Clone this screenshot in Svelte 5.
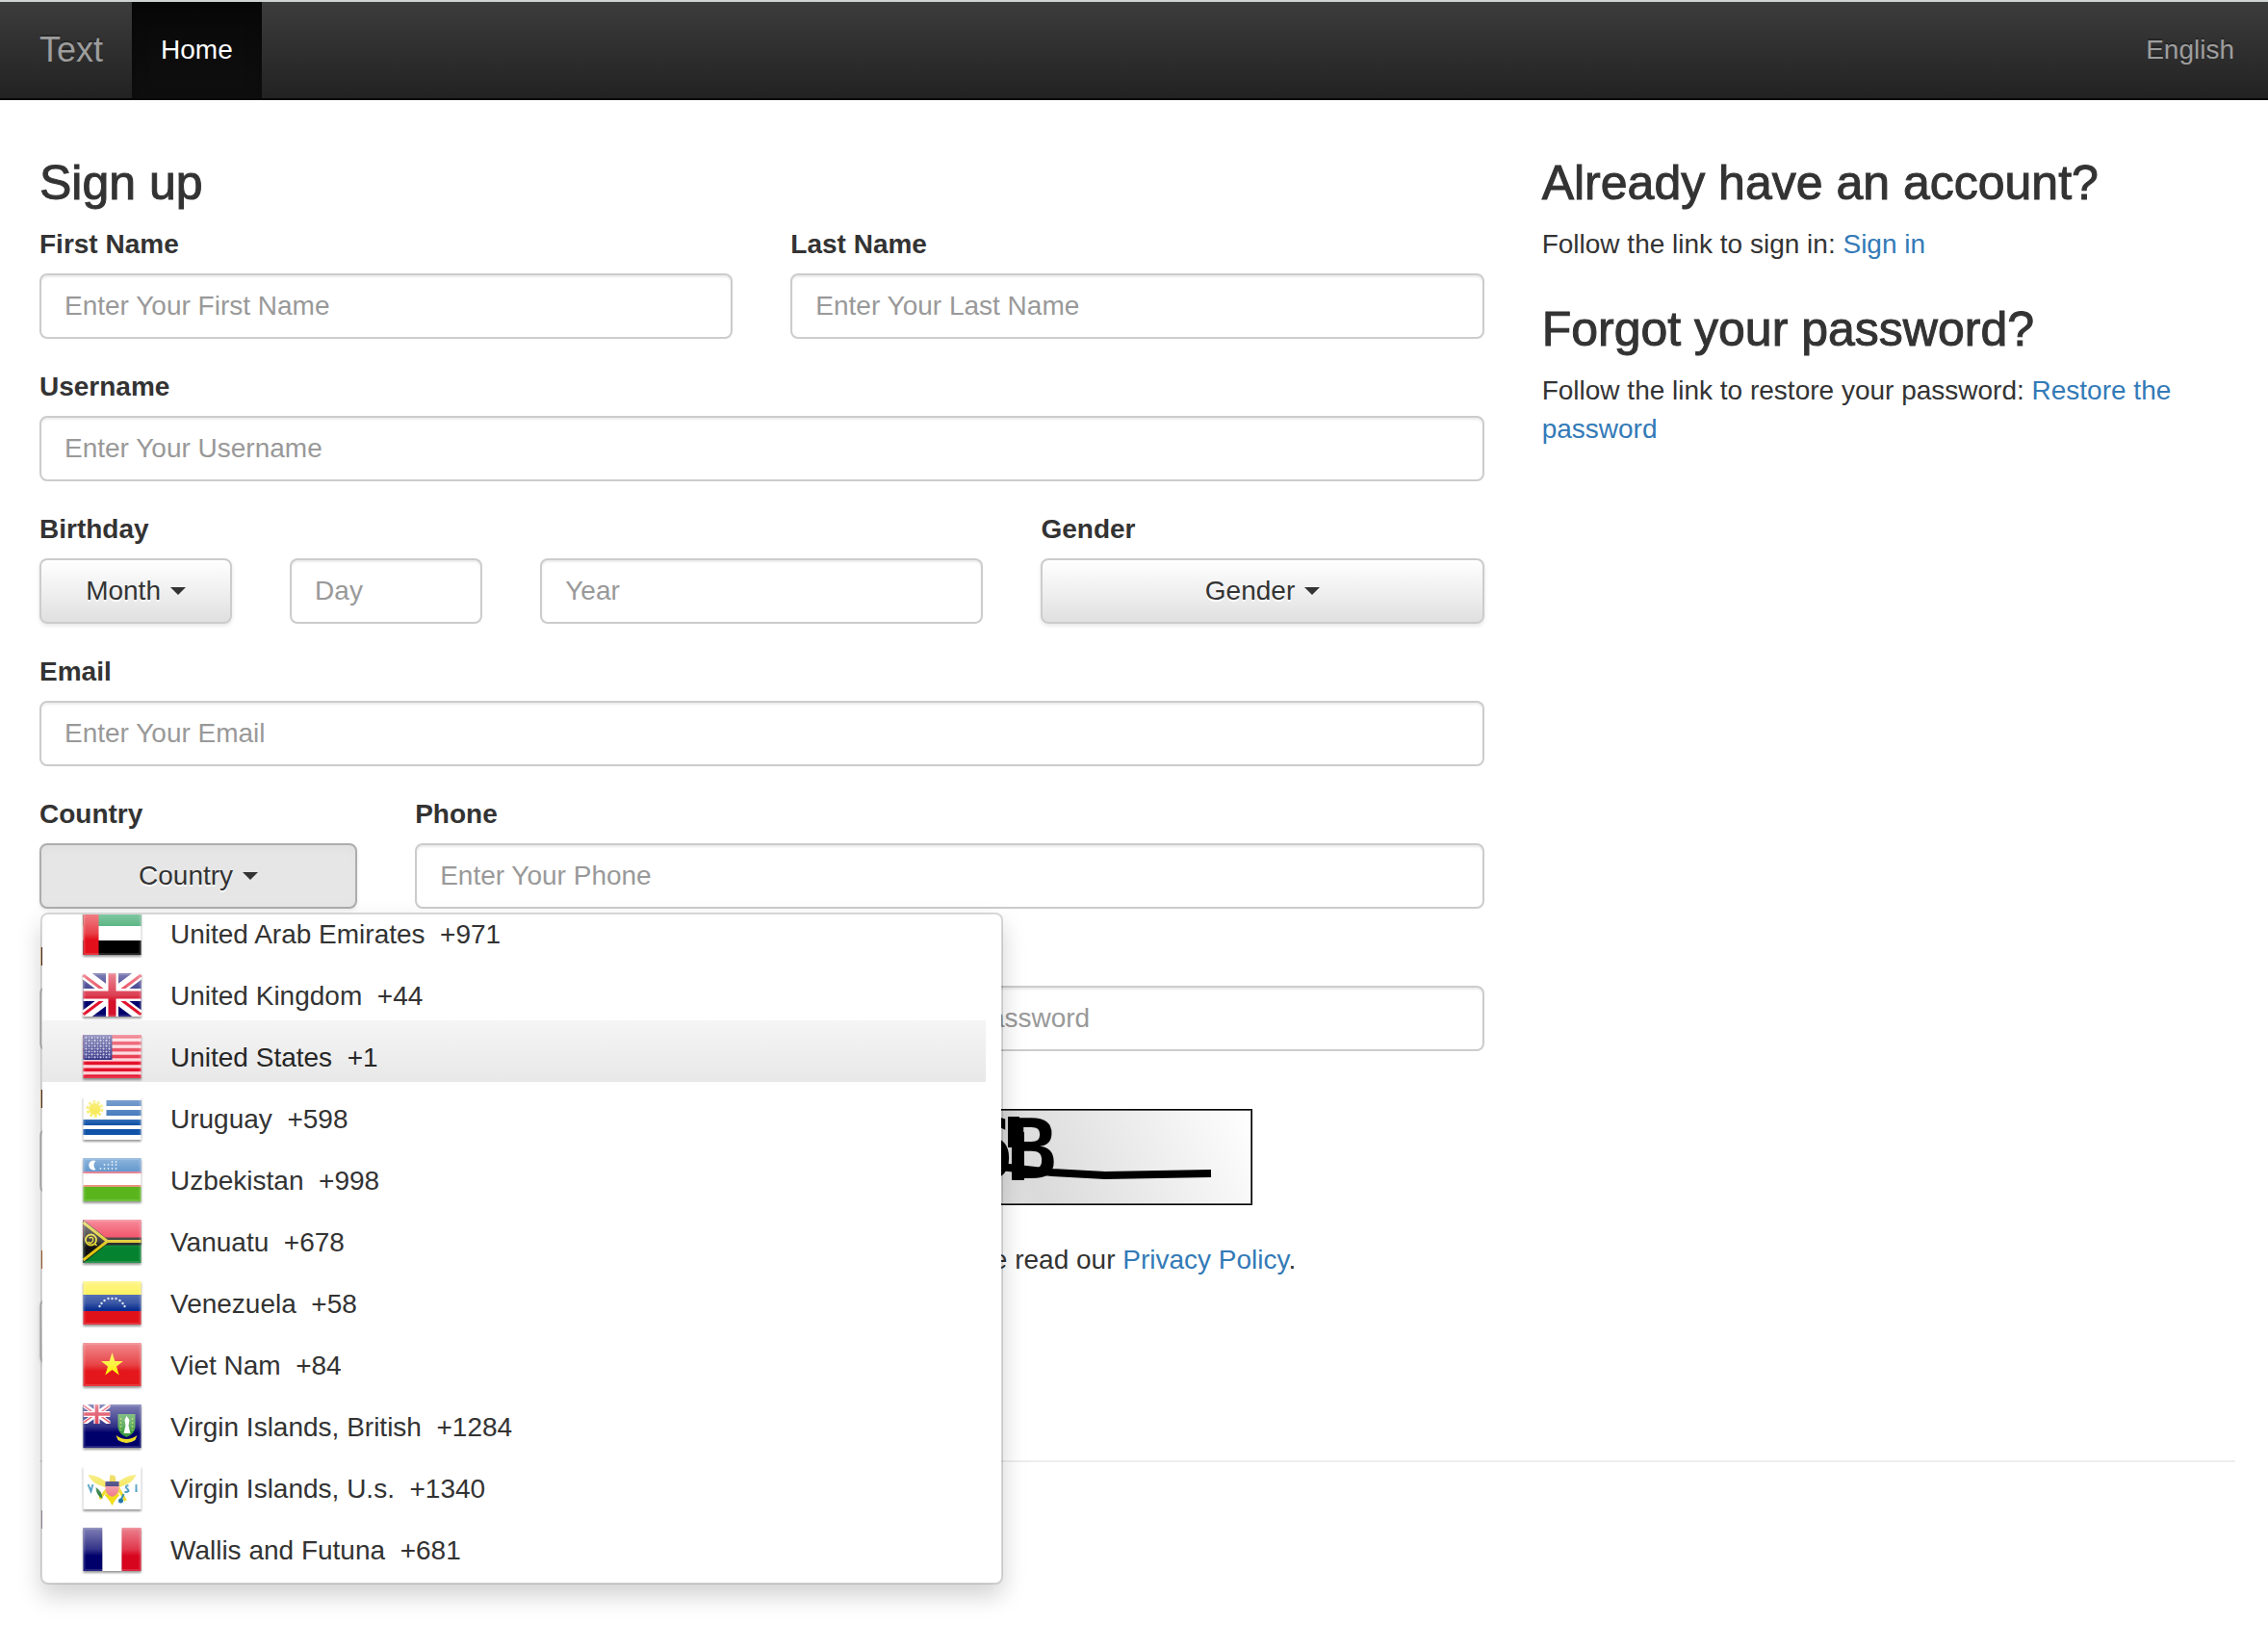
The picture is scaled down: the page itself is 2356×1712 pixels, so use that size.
<script>
  const countries = [
    { code: 'ae', name: 'United Arab Emirates', dial: '+971' },
    { code: 'gb', name: 'United Kingdom', dial: '+44' },
    { code: 'us', name: 'United States', dial: '+1' },
    { code: 'uy', name: 'Uruguay', dial: '+598' },
    { code: 'uz', name: 'Uzbekistan', dial: '+998' },
    { code: 'vu', name: 'Vanuatu', dial: '+678' },
    { code: 've', name: 'Venezuela', dial: '+58' },
    { code: 'vn', name: 'Viet Nam', dial: '+84' },
    { code: 'vg', name: 'Virgin Islands, British', dial: '+1284' },
    { code: 'vi', name: 'Virgin Islands, U.s.', dial: '+1340' },
    { code: 'wf', name: 'Wallis and Futuna', dial: '+681' },
  ];
  let highlighted = $state('us');
  let open = $state(true);

  const stripes = [0, 1, 2, 3, 4, 5, 6];
  const starRows = [0, 1, 2, 3, 4, 5, 6, 7];
  const starCols = [0, 1, 2, 3, 4, 5, 6, 7, 8];
  const arc = [[17, 25], [19, 22], [22, 19], [26, 17], [30, 17], [34, 17], [38, 19], [41, 22], [43, 25]];
  const dots = [[22, 10], [26, 10], [30, 10], [34, 10], [18, 10], [26, 6], [30, 6], [34, 6], [22, 6], [30, 3], [34, 3]];
</script>

{#snippet unionJack()}
  <rect width="60" height="45" fill="#00006b" />
  <path d="M0 0L60 45M60 0L0 45" stroke="#fff" stroke-width="11" />
  <path d="M0 2L28 23M60 2L32 23M0 43L28 22M60 43L32 22" stroke="#e2142d" stroke-width="3" />
  <path d="M30 0V45M0 22.500H60" stroke="#fff" stroke-width="13" />
  <path d="M30 0V45M0 22.500H60" stroke="#d5112b" stroke-width="8" />
{/snippet}

{#snippet flag(code)}
  <svg class="flag" viewBox="0 0 60 45" aria-hidden="true">
    {#if code === 'ae'}
      <rect width="60" height="15" fill="#149650" />
      <rect y="15" width="60" height="15" fill="#fff" />
      <rect y="30" width="60" height="15" fill="#000" />
      <rect width="16" height="45" fill="#e3101b" />
    {:else if code === 'gb'}
      {@render unionJack()}
    {:else if code === 'us'}
      <rect width="60" height="45" fill="#ffd0d6" />
      {#each stripes as i}
        <rect y={i * 7 - i * 0.1} width="60" height="3.600" fill="#e3102b" />
      {/each}
      <rect width="30" height="26" fill="#1a1a78" />
      {#each starRows as r}
        {#each starCols as c}
          <circle cx={3 + c * 3} cy={3 + r * 2.9} r={(r + c) % 2 ? 0.7 : 1.1} fill="#b9b9dc" />
        {/each}
      {/each}
    {:else if code === 'uy'}
      <rect width="60" height="45" fill="#fff" />
      <rect x="24" y="4" width="36" height="6" fill="#0f53a8" />
      <rect x="24" y="14" width="36" height="6" fill="#0f53a8" />
      <rect y="24" width="60" height="6" fill="#0f53a8" />
      <rect y="34" width="60" height="6" fill="#0f53a8" />
      <circle cx="12" cy="13" r="7.500" fill="none" stroke="#f8e84a" stroke-width="3" stroke-dasharray="3 1.700" />
      <circle cx="12" cy="13" r="6" fill="#f6e21c" />
    {:else if code === 'uz'}
      <rect width="60" height="45" fill="#fff" />
      <rect width="60" height="15" fill="#1e6bb8" />
      <rect y="14" width="60" height="2" fill="#d8506a" />
      <rect y="28" width="60" height="2" fill="#e8907c" />
      <rect y="30" width="60" height="15" fill="#5ab51d" />
      <path d="M13 3A5 5 0 1 0 13 12A6 6 0 0 1 13 3Z" fill="#fff" />
      {#each dots as [x, y]}
        <circle cx={x} cy={y + 1} r="0.900" fill="#d5e4f4" />
      {/each}
    {:else if code === 'vu'}
      <rect width="60" height="22" fill="#ee1c3a" />
      <rect y="22" width="60" height="23" fill="#04822f" />
      <path d="M0 22.500H60" stroke="#111" stroke-width="8" />
      <path d="M0 0L28 22.500L0 45Z" fill="#111" />
      <path d="M0 3L25 22.500L0 42M25 22.500H60" fill="none" stroke="#dcc511" stroke-width="3" />
      <circle cx="8" cy="21" r="5.500" fill="none" stroke="#e6d51d" stroke-width="1.800" />
      <path d="M6 19Q11 17 10 22Q8 26 5 23M12 25L14 27" fill="none" stroke="#e6d51d" stroke-width="1.500" />
    {:else if code === 've'}
      <rect width="60" height="14" fill="#fdec16" />
      <rect y="14" width="60" height="17" fill="#0a2f91" />
      <rect y="31" width="60" height="14" fill="#e1111a" />
      {#each arc as [x, y]}
        <circle cx={x} cy={y + 1} r="1.200" fill="#d8deee" />
      {/each}
    {:else if code === 'vn'}
      <rect width="60" height="45" fill="#e3171c" />
      <path d="M30 10L32.800 18.900H41.500L34.500 24.500L37.200 33.500L30 28L22.800 33.500L25.500 24.500L18.500 18.900H27.200Z" fill="#fff013" />
    {:else if code === 'vg'}
      <rect width="60" height="45" fill="#00006b" />
      <svg width="28" height="20" viewBox="0 0 60 45" preserveAspectRatio="none">{@render unionJack()}</svg>
      <path d="M34 32Q45 40 56 32L54 37Q45 43 36 37Z" fill="#eedc25" />
      <path d="M36 10H54V24Q53 31 45 34Q37 31 36 24Z" fill="#3c9b3f" />
      <path d="M45 12L48 16L47 22L49 30H42L44 22L43 16Z" fill="#fff" />
      <path d="M39 14V27M51 14V27" stroke="#a5cb3d" stroke-width="1.500" stroke-dasharray="2 2" />
    {:else if code === 'vi'}
      <rect width="60" height="45" fill="#fff" />
      <path d="M5 9Q16 10 23 16L30 22L37 16Q44 10 55 9Q51 18 40 21L35 23H25L20 21Q9 18 5 9Z" fill="#f3e33c" />
      <path d="M28 9L33 10L34 16H27Z" fill="#e9cf1f" />
      <path d="M23 24L30 38L37 24L44 36M23 26L17 34" fill="none" stroke="#efdc2a" stroke-width="3" />
      <path d="M25 31L30 37L35 31Z" fill="#f1dd1b" stroke="#f1dd1b" stroke-width="3" />
      <path d="M23 17H37V24Q36 30 30 32Q24 30 23 24Z" fill="#f08393" />
      <path d="M23 16H37V21H23Z" fill="#1c2067" />
      <path d="M13 22Q19 25 20 34Q13 30 13 22Z" fill="#34814a" />
      <path d="M5 19L8 26L10 19M55 19V27M47 20Q42 21 46 24Q49 27 43 27M42 29L38 38" fill="none" stroke="#3b93b9" stroke-width="2" />
      <circle cx="39" cy="36" r="2.500" fill="#2379a8" />
    {:else}
      <rect width="20" height="45" fill="#00006b" />
      <rect x="20" width="20" height="45" fill="#fff" />
      <rect x="40" width="20" height="45" fill="#d8051f" />
    {/if}
    <rect width="60" height="45" fill="url(#gloss)" />
    <rect x="1" y="1" width="58" height="43" fill="none" stroke="#fff" stroke-opacity="0.150" stroke-width="2" />
  </svg>
{/snippet}

<svg class="defs" aria-hidden="true">
  <defs>
    <linearGradient id="gloss" x1="0" y1="0" x2="0" y2="1">
      <stop offset="0" stop-color="#fff" stop-opacity="0.500" />
      <stop offset="0.500" stop-color="#fff" stop-opacity="0.200" />
      <stop offset="0.650" stop-color="#fff" stop-opacity="0" />
    </linearGradient>
  </defs>
</svg>

<header class="navbar">
  <nav class="left">
    <a class="brand" href="#top">Text</a>
    <a class="item active" href="#home">Home</a>
  </nav>
  <a class="item language" href="#language">English</a>
</header>

<div class="container">
  <main class="grid">
    <form class="signup" onsubmit={(e) => e.preventDefault()}>
      <h3>Sign up</h3>
      <div class="grid">
        <div class="field span6">
          <label for="first">First Name</label>
          <input id="first" type="text" placeholder="Enter Your First Name" />
        </div>
        <div class="field span6">
          <label for="last">Last Name</label>
          <input id="last" type="text" placeholder="Enter Your Last Name" />
        </div>
        <div class="field span12">
          <label for="username">Username</label>
          <input id="username" type="text" placeholder="Enter Your Username" />
        </div>
        <div class="field span2">
          <label for="month">Birthday</label>
          <button id="month" class="btn" type="button" aria-haspopup="listbox">Month <span class="caret"></span></button>
        </div>
        <div class="field span2 bottom">
          <input type="text" placeholder="Day" aria-label="Day" />
        </div>
        <div class="field span4 bottom">
          <input type="text" placeholder="Year" aria-label="Year" />
        </div>
        <div class="field span4">
          <label for="gender">Gender</label>
          <button id="gender" class="btn" type="button" aria-haspopup="listbox">Gender <span class="caret"></span></button>
        </div>
        <div class="field span12">
          <label for="email">Email</label>
          <input id="email" type="email" placeholder="Enter Your Email" />
        </div>
        <div class="field span3 dropdown">
          <label for="country">Country</label>
          <button id="country" class="btn" class:pressed={open} type="button" aria-haspopup="true" aria-expanded={open} onclick={() => (open = !open)}>
            Country <span class="caret"></span>
          </button>
          {#if open}
            <div class="menu">
              <ul>
                {#each countries as c}
                  <li>
                    <a href={'#' + c.code} class:highlighted={highlighted === c.code} onmouseenter={() => (highlighted = c.code)}>
                      {@render flag(c.code)}
                      <span>{c.name}&nbsp; {c.dial}</span>
                    </a>
                  </li>
                {/each}
              </ul>
            </div>
          {/if}
        </div>
        <div class="field span9">
          <label for="phone">Phone</label>
          <input id="phone" type="tel" placeholder="Enter Your Phone" />
        </div>
        <div class="field span6">
          <label for="password">Password</label>
          <input id="password" type="password" placeholder="Enter Your Password" />
        </div>
        <div class="field span6 bottom">
          <input type="password" placeholder="Repeat Your Password" aria-label="Repeat Your Password" />
        </div>
        <div class="field span6">
          <label for="captcha">Enter Captcha</label>
          <input id="captcha" type="text" placeholder="Enter Captcha" />
        </div>
        <div class="span6 captcha">
          <svg width="480" height="100" viewBox="0 0 480 100" role="img" aria-label="Captcha">
            <defs>
              <linearGradient id="shade" x1="0" y1="0.100" x2="1" y2="0">
                <stop offset="0" stop-color="#fff" />
                <stop offset="0.450" stop-color="#dadada" />
                <stop offset="1" stop-color="#fff" />
              </linearGradient>
            </defs>
            <rect width="480" height="100" fill="url(#shade)" />
            <text x="180" y="72" class="glyph">6</text>
            <text x="225" y="72" class="glyph">B</text>
            <path d="M226 8H238V24H243V74H230V40H226Z" />
            <path d="M200 58L272 66L327 69L437 67" fill="none" stroke="#000" stroke-width="8" />
            <rect x="1" y="1" width="478" height="98" fill="none" stroke="#555" stroke-width="2" />
            <rect x="0.500" y="0.500" width="479" height="99" fill="none" stroke="#000" />
          </svg>
        </div>
      </div>
      <p>
        For info about how we collect, keep, and process your private information, please read our <a href="#privacy">Privacy Policy</a>.
      </p>
      <button class="btn submit" type="submit">Sign up</button>
    </form>

    <aside>
      <h3>Already have an account?</h3>
      <p>Follow the link to sign in: <a href="#signin">Sign in</a></p>
      <h3 class="next">Forgot your password?</h3>
      <p>Follow the link to restore your password: <a href="#restore">Restore the password</a></p>
    </aside>
  </main>

  <hr />
  <footer><a href="#feedback">Feedback</a></footer>
</div>

<style>
  :global(body) {
    background: #fff;
    color: #333;
    font: 28px/40px "Liberation Sans", Arial, sans-serif;
  }
  * {
    box-sizing: border-box;
  }
  a {
    color: #337ab7;
    text-decoration: none;
  }
  .defs {
    position: absolute;
    width: 0;
    height: 0;
  }

  .navbar {
    display: flex;
    justify-content: space-between;
    border-top: 2px solid #d0d3d3;
    border-bottom: 2px solid #080808;
    background: linear-gradient(#3c3c3c, #222);
    padding: 0 5px 0 11px;
  }
  .left {
    display: flex;
  }
  .navbar a {
    padding: 30px;
    color: #9d9d9d;
    text-shadow: 0 -2px 0 rgba(0, 0, 0, 0.25);
  }
  .navbar .brand {
    font-size: 36px;
  }
  .navbar .active {
    color: #fff;
    background: linear-gradient(#080808, #0f0f0f);
    box-shadow: inset 0 6px 18px rgba(0, 0, 0, 0.25);
  }

  .container {
    padding: 60px 34px 112px 41px;
  }
  .grid {
    display: grid;
    grid-template-columns: repeat(12, minmax(0, 1fr));
    column-gap: 60px;
    row-gap: 30px;
  }
  .signup {
    grid-column: span 8;
  }
  aside {
    grid-column: span 4;
  }
  h3 {
    margin: 0 0 18px;
    font-size: 50px;
    font-weight: 500;
    line-height: 52px;
    -webkit-text-stroke: 1px #333;
  }
  .next {
    margin-top: 42px;
  }
  p {
    margin: 0 0 20px;
  }

  .span2 { grid-column: span 2; }
  .span3 { grid-column: span 3; }
  .span4 { grid-column: span 4; }
  .span6 { grid-column: span 6; }
  .span9 { grid-column: span 9; }
  .span12 { grid-column: span 12; }

  .field {
    display: flex;
    flex-direction: column;
    gap: 10px;
  }
  .bottom {
    padding-top: 50px;
  }
  label {
    font-weight: 700;
  }
  input,
  .btn {
    width: 100%;
    height: 68px;
    padding: 0 24px;
    border: 2px solid #ccc;
    border-radius: 8px;
    font: inherit;
    color: #333;
  }
  input {
    background: #fff;
    box-shadow: inset 0 2px 2px rgba(0, 0, 0, 0.075);
  }
  input::placeholder {
    color: #999;
    opacity: 1;
  }
  .btn {
    display: flex;
    align-items: center;
    justify-content: center;
    gap: 10px;
    background: linear-gradient(#fff, #e0e0e0);
    box-shadow: 0 2px 4px rgba(0, 0, 0, 0.1);
    text-shadow: 0 2px 0 #fff;
  }
  .pressed {
    background: #e6e6e6;
    border-color: #adadad;
    box-shadow: inset 0 6px 10px rgba(0, 0, 0, 0.02), 0 2px 4px rgba(0, 0, 0, 0.08);
  }
  .caret {
    border: 8px solid transparent;
    border-top-color: #333;
    border-bottom: 0;
  }
  .submit {
    width: 200px;
  }

  .dropdown {
    position: relative;
  }
  .menu {
    position: absolute;
    z-index: 10;
    top: 122px;
    left: 1px;
    width: 1000px;
    height: 698px;
    overflow: hidden;
    padding: 0 16px 10px 0;
    border: 2px solid rgba(0, 0, 0, 0.15);
    border-radius: 8px;
    background: #fff;
    background-clip: padding-box;
    box-shadow: 0 12px 24px rgba(0, 0, 0, 0.175);
  }
  ul {
    margin: -18px 0 0;
    padding: 0;
    list-style: none;
  }
  li a {
    display: flex;
    align-items: center;
    gap: 30px;
    height: 64px;
    padding: 14px 42px 0;
    color: #333;
  }
  .highlighted {
    background: linear-gradient(#f5f5f5, #e8e8e8);
    color: #262626;
  }
  .flag {
    width: 61px;
    height: 45px;
    margin-bottom: 4px;
    filter: drop-shadow(0 2px 1px rgba(0, 0, 0, 0.4));
  }

  .captcha {
    padding: 30px 0 7px;
  }
  .captcha svg {
    display: block;
  }
  .glyph {
    font: 700 86px "DejaVu Sans Mono", monospace;
  }
  .signup > p {
    margin-top: 30px;
  }

  hr {
    height: 2px;
    margin: 100px 0 40px;
    border: 0;
    background: #eee;
  }
</style>
